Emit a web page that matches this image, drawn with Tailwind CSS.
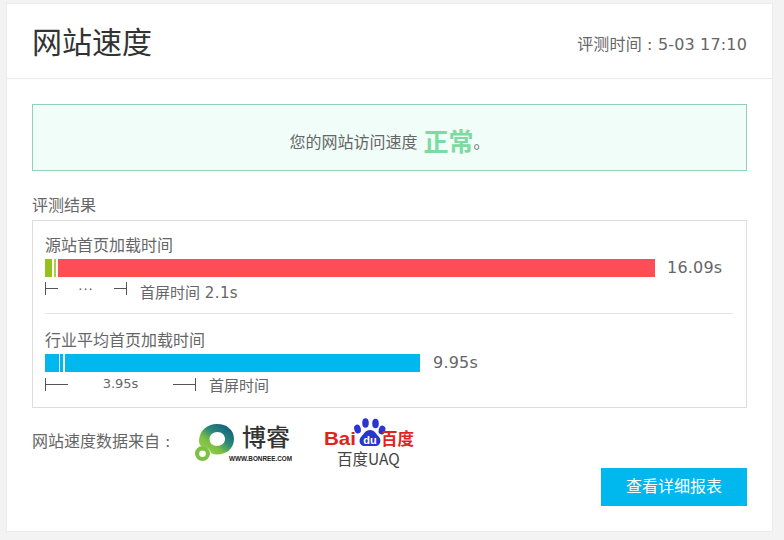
<!DOCTYPE html>
<html lang="zh">
<head>
<meta charset="utf-8">
<script src="https://cdn.jsdelivr.net/npm/@tailwindcss/browser@4"></script>
</head>
<body class="m-0 bg-[#f3f3f3] font-['DejaVu_Sans','Noto_Sans_CJK_SC',sans-serif] text-[#666]">
<div class="w-[784px] h-[540px] overflow-hidden pt-[3px] pl-[6px]">
  <div class="w-[767px] h-[529px] bg-white border border-[#ebebeb]">
    <header class="h-[75px] border-b border-[#ebebeb] px-[25px] flex items-center justify-between">
      <h1 class="text-[30px] leading-[40px] text-[#333] font-normal mt-[3px]">网站速度</h1>
      <div class="text-[16px] leading-[24px] mt-[7px] whitespace-nowrap tracking-[0.16px]">评测时间 : 5-03 17:10</div>
    </header>
    <main class="px-[25px] pt-[25px]">
      <div class="h-[67px] border border-[#8fd3b6] bg-[#f0fdf8] flex items-end justify-center pb-[12px] text-[16px] leading-[30px]">
        <span>您的网站访问速度</span>
        <span class="ml-[6px] text-[25px] font-bold text-[#7ddaa0] leading-[30px]">正常</span>
        <span>。</span>
      </div>
      <h2 class="mt-[23px] text-[16px] leading-[24px] font-normal">评测结果</h2>
      <section class="mt-[2px] h-[188px] border border-[#dddddd] px-[12px] pt-[13px]">
        <div class="text-[16px] leading-[24px]">源站首页加载时间</div>
        <div class="mt-[1px] flex items-center h-[18px]">
          <div class="flex h-[18px] w-[610px]">
            <div class="w-[7px] bg-[#95c11f]"></div>
            <div class="w-[2px]"></div>
            <div class="w-[2px] bg-[#a9cf45]"></div>
            <div class="w-[2px]"></div>
            <div class="flex-1 bg-[#ff4d55]"></div>
          </div>
          <div class="ml-[12px] text-[16px] tracking-[0.2px]">16.09s</div>
        </div>
        <div class="mt-[5px] h-[25px] flex items-start text-[15px] leading-[22px]">
          <div class="w-[13px] h-[13px] border-l border-[#555] relative"><div class="absolute left-0 right-0 top-[6px] h-px bg-[#555]"></div></div>
          <div class="w-[56px] text-center text-[13px] leading-[8px] tracking-[1px] text-[#555]">...</div>
          <div class="w-[13px] h-[13px] border-r border-[#555] relative"><div class="absolute left-0 right-0 top-[6px] h-px bg-[#555]"></div></div>
          <div class="ml-[13px] whitespace-nowrap">首屏时间 <span class="tracking-[0.4px]">2.1s</span></div>
        </div>
        <div class="mt-[6px] h-px w-[688px] bg-[#e5e5e5]"></div>
        <div class="mt-[15px] text-[16px] leading-[24px]">行业平均首页加载时间</div>
        <div class="mt-[1px] flex items-center h-[18px]">
          <div class="flex h-[18px] w-[375px]">
            <div class="w-[14px] bg-[#00b7ee]"></div>
            <div class="w-[1px]"></div>
            <div class="w-[3px] bg-[#00b7ee]"></div>
            <div class="w-[2px]"></div>
            <div class="flex-1 bg-[#00b7ee]"></div>
          </div>
          <div class="ml-[13px] text-[16px] tracking-[0.2px]">9.95s</div>
        </div>
        <div class="mt-[6px] h-[25px] flex items-start text-[15px] leading-[22px]">
          <div class="w-[23px] h-[13px] border-l border-[#555] relative"><div class="absolute left-0 right-0 top-[6px] h-px bg-[#555]"></div></div>
          <div class="w-[105px] text-center text-[13px] leading-[11px]">3.95s</div>
          <div class="w-[23px] h-[13px] border-r border-[#555] relative"><div class="absolute left-0 right-0 top-[6px] h-px bg-[#555]"></div></div>
          <div class="ml-[13px] mt-[-3px] whitespace-nowrap">首屏时间</div>
        </div>
      </section>
      <div class="mt-[12px] flex items-start h-[48px]">
        <div class="w-[162px] text-[16px] leading-[44px] whitespace-nowrap">网站速度数据来自 :</div>
        <svg class="block" width="100" height="44" viewBox="0 0 100 44" aria-label="博睿">
          <defs>
            <linearGradient id="ring" x1="0.85" y1="0.1" x2="0.15" y2="0.9">
              <stop offset="0" stop-color="#17607f"/>
              <stop offset="0.4" stop-color="#2a8a78"/>
              <stop offset="0.7" stop-color="#7cc042"/>
              <stop offset="1" stop-color="#93cc4e"/>
            </linearGradient>
          </defs>
          <path fill="#7fbf42" fill-rule="evenodd" d="M8.500 26a7.500 7.500 0 1 0 0 15a7.500 7.500 0 1 0 0-15zM8.500 30.500a3.300 3.300 0 1 1 0 6.600a3.300 3.300 0 1 1 0-6.600z"/>
          <path fill="url(#ring)" fill-rule="evenodd" d="M23 4C13 4 5 11 5 21c0 3 1 5 4 6 4 0 7 2 8 6 2 1 4 1.500 6 1.500 10 0 17-6.500 17-15.500S33 4 23 4zM23.500 12c4.400 0 7.500 3 7.500 7s-3.500 7-8 7-7.500-3-7.500-7 3.500-7 8-7z"/>
          <text x="48" y="26" font-size="24" font-weight="500" fill="#333" font-family="'Noto Sans CJK SC',sans-serif">博睿</text>
          <text x="35" y="41" font-size="7" font-weight="700" fill="#222" textLength="63" lengthAdjust="spacingAndGlyphs" font-family="'Liberation Sans',sans-serif">WWW.BONREE.COM</text>
        </svg>
        <svg class="block ml-[29px] -mt-[5px]" width="96" height="56" viewBox="0 0 96 56" aria-label="百度UAQ">
          <text x="1" y="30" font-size="19" font-weight="700" fill="#e2231a" textLength="32" lengthAdjust="spacingAndGlyphs" font-family="'Liberation Sans',sans-serif">Bai</text>
          <ellipse cx="34.500" cy="14" rx="3.300" ry="4.500" fill="#2a35d0" transform="rotate(-15 34.500 14)"/>
          <ellipse cx="42.500" cy="8" rx="3.300" ry="4.800" fill="#2a35d0"/>
          <ellipse cx="52.500" cy="8.500" rx="3.300" ry="4.800" fill="#2a35d0"/>
          <ellipse cx="59" cy="15" rx="3.300" ry="4.500" fill="#2a35d0" transform="rotate(15 59 15)"/>
          <path d="M47 15c5 0 6 4 9 7 3 3 1 9-3 9H41c-4 0-6-6-3-9 3-3 4-7 9-7z" fill="#2a35d0"/>
          <text x="47" y="29" text-anchor="middle" font-size="11" font-weight="700" fill="#fff" font-family="'Liberation Sans',sans-serif">du</text>
          <text x="58" y="30" font-size="16.500" font-weight="700" fill="#e2231a" font-family="'Noto Sans CJK SC',sans-serif">百度</text>
          <text x="14" y="50" font-size="15.500" fill="#444" font-family="'Noto Sans CJK SC',sans-serif">百度UAQ</text>
        </svg>
      </div>
      <div class="flex justify-end">
        <button class="w-[146px] h-[38px] bg-[#00b7ee] text-white text-[16px] leading-[38px] text-center">查看详细报表</button>
      </div>
    </main>
  </div>
</div>
</body>
</html>
